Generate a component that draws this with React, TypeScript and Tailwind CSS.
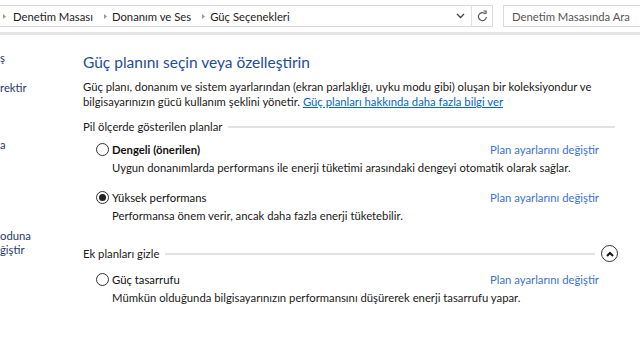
import React from "react";

const font = { fontFamily: 'Lato, "Noto Sans", sans-serif' };

const Radio: React.FC<{ checked?: boolean }> = ({ checked }) => (
  <span className="w-[13px] h-[13px] rounded-full border border-[#333] bg-white flex items-center justify-center shrink-0">
    {checked && <span className="w-[7px] h-[7px] rounded-full bg-[#222]" />}
  </span>
);

const Arrow: React.FC = () => (
  <svg width="5" height="7" viewBox="0 0 5 7" className="shrink-0">
    <path d="M1 1 L4 3.5 L1 6 Z" fill="#9a9a9a" />
  </svg>
);

const PlanRow: React.FC<{
  name: string;
  desc: string;
  checked?: boolean;
  bold?: boolean;
  top: string;
}> = ({ name, desc, checked, bold, top }) => (
  <div className={top}>
    <div className="flex items-center justify-between h-[15px] pl-[13px] pr-[19px]">
      <div className="flex items-center gap-[3px]">
        <Radio checked={checked} />
        <span className={bold ? "font-bold text-[#111]" : "text-[#111]"}>{name}</span>
      </div>
      <span className="text-[#3b73d0]">Plan ayarlarını değiştir</span>
    </div>
    <p className="pl-[29px] mt-[3px] text-[#1a1a1a] whitespace-nowrap">{desc}</p>
  </div>
);

const SectionHeader: React.FC<{ label: string; top: string; toggle?: boolean }> = ({
  label,
  top,
  toggle,
}) => (
  <div className={`flex items-center gap-[6px] h-[15px] ${top}`}>
    <span className="text-[#1a1a1a] shrink-0">{label}</span>
    {toggle ? (
      <>
        <div className="flex-1 h-[2px] bg-[#e2e2e2]" />
        <span className="w-[17px] h-[17px] rounded-full border-[1.5px] border-[#333] flex items-center justify-center shrink-0">
          <svg width="8" height="6" viewBox="0 0 8 6">
            <path d="M1 5 L4 2 L7 5" stroke="#111" strokeWidth="2" fill="none" />
          </svg>
        </span>
      </>
    ) : (
      <div className="flex-1 h-[2px] bg-[#e2e2e2] mr-[3px]" />
    )}
  </div>
);

export default function App() {
  return (
    <div
      className="w-[640px] h-[337px] overflow-hidden bg-white flex flex-col text-[11.3px] leading-[15px]"
      style={font}
    >
      {/* address bar */}
      <div className="h-[32px] flex items-center shrink-0">
        <div className="ml-[-2px] w-[495px] h-[22px] border border-[#d9d9d9] flex items-center">
          <div className="flex items-center flex-1 pl-[3px] text-[#222] whitespace-nowrap">
            <Arrow />
            <span className="ml-[6px]">Denetim Masası</span>
            <span className="ml-[10px]"><Arrow /></span>
            <span className="ml-[4px]">Donanım ve Ses</span>
            <span className="ml-[10px]"><Arrow /></span>
            <span className="ml-[4px]">Güç Seçenekleri</span>
          </div>
          <svg width="9" height="6" viewBox="0 0 9 6" className="mr-[6px]">
            <path d="M1 1 L4.5 4.5 L8 1" stroke="#444" strokeWidth="1.3" fill="none" />
          </svg>
          <div className="w-px h-full bg-[#e0e0e0]" />
          <div className="w-[20px] flex items-center justify-center">
            <svg width="11" height="12" viewBox="0 0 11 12">
              <path d="M8.5 4 A4 4 0 1 0 9.4 7" stroke="#555" strokeWidth="1.2" fill="none" />
              <path d="M6.5 1 L9 1 L9 4" stroke="#555" strokeWidth="1.2" fill="none" />
            </svg>
          </div>
        </div>
        <div className="ml-[10px] flex-1 h-[22px] border border-[#d9d9d9] border-r-0 flex items-center pl-[8px] text-[#555] whitespace-nowrap overflow-hidden">
          Denetim Masasında Ara
        </div>
      </div>
      <div className="h-[3px] bg-[#e6e6e6] shrink-0" />

      <div className="flex flex-1">
        {/* left pane, clipped */}
        <aside className="w-[83px] shrink-0 text-[#1f3a6e]">
          <p className="mt-[15px]">ş</p>
          <p className="mt-[15px]">rektir</p>
          <p className="mt-[42px]">a</p>
          <p className="mt-[77px] leading-[14px]">
            oduna
            <br />
            ğiştir
          </p>
        </aside>

        <main className="flex-1 pr-[22px]">
          <h1 className="mt-[17px] text-[15.5px] leading-[20px] text-[#1e4d9e]">
            Güç planını seçin veya özelleştirin
          </h1>
          <p className="mt-[7px] text-[#1a1a1a] whitespace-nowrap">
            Güç planı, donanım ve sistem ayarlarından (ekran parlaklığı, uyku modu gibi) oluşan bir koleksiyondur ve
            <br />
            bilgisayarınızın gücü kullanım şeklini yönetir.{" "}
            <span className="text-[#0066cc] underline">Güç planları hakkında daha fazla bilgi ver</span>
          </p>

          <SectionHeader label="Pil ölçerde gösterilen planlar" top="mt-[10px]" />

          <PlanRow
            top="mt-[8px]"
            bold
            name="Dengeli (önerilen)"
            desc="Uygun donanımlarda performans ile enerji tüketimi arasındaki dengeyi otomatik olarak sağlar."
          />
          <PlanRow
            top="mt-[15px]"
            checked
            name="Yüksek performans"
            desc="Performansa önem verir, ancak daha fazla enerji tüketebilir."
          />

          <SectionHeader label="Ek planları gizle" top="mt-[23px]" toggle />

          <PlanRow
            top="mt-[11px]"
            name="Güç tasarrufu"
            desc="Mümkün olduğunda bilgisayarınızın performansını düşürerek enerji tasarrufu yapar."
          />
        </main>
      </div>
    </div>
  );
}
